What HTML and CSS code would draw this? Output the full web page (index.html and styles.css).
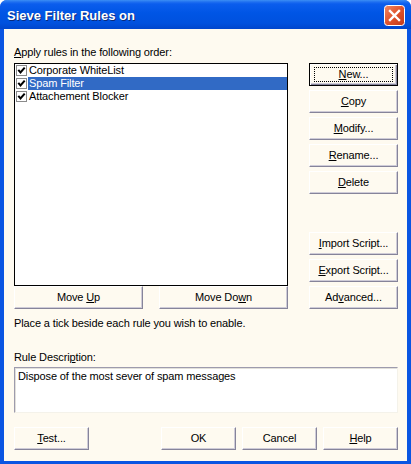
FILE: index.html
```html
<!DOCTYPE html>
<html>
<head>
<meta charset="utf-8">
<link rel="stylesheet" href="styles.css">
</head>
<body>
<div class="window">
  <div class="titlebar">
    <span class="title">Sieve Filter Rules on</span>
    <span class="close">
      <svg width="21" height="21" viewBox="0 0 21 21">
        <defs>
          <linearGradient id="cg" x1="0" y1="0" x2="1" y2="1">
            <stop offset="0" stop-color="#f08a66"/>
            <stop offset="0.5" stop-color="#e0532c"/>
            <stop offset="1" stop-color="#c0391a"/>
          </linearGradient>
        </defs>
        <rect x="0.5" y="0.5" width="20" height="20" rx="3" fill="url(#cg)" stroke="#ffffff"/>
        <path d="M6 6 L15 15 M15 6 L6 15" stroke="#ffffff" stroke-width="2.4" stroke-linecap="square"/>
      </svg>
    </span>
  </div>
  <div class="client">
    <div class="label"><u>A</u>pply rules in the following order:</div>
    <div class="main">
      <div class="leftcol">
        <div class="listbox">
          <div class="item">
            <span class="chk"><svg width="11" height="11" viewBox="0 0 11 11"><path d="M2.3 4.8 L4.5 7.4 L8.7 2.6" fill="none" stroke="#000" stroke-width="2"/></svg></span>
            <span class="txt">Corporate WhiteList</span>
          </div>
          <div class="item selected">
            <span class="chk"><svg width="11" height="11" viewBox="0 0 11 11"><path d="M2.3 4.8 L4.5 7.4 L8.7 2.6" fill="none" stroke="#000" stroke-width="2"/></svg></span>
            <span class="txt">Spam Filter</span>
          </div>
          <div class="item">
            <span class="chk"><svg width="11" height="11" viewBox="0 0 11 11"><path d="M2.3 4.8 L4.5 7.4 L8.7 2.6" fill="none" stroke="#000" stroke-width="2"/></svg></span>
            <span class="txt">Attachement Blocker</span>
          </div>
        </div>
        <div class="moverow">
          <span class="btn move"><span>Move <u>U</u>p</span></span>
          <span class="btn move"><span>Move Do<u>w</u>n</span></span>
        </div>
      </div>
      <div class="rightcol">
        <span class="btn side default"><span class="focus"><span><u>N</u>ew...</span></span></span>
        <span class="btn side"><span><u>C</u>opy</span></span>
        <span class="btn side"><span><u>M</u>odify...</span></span>
        <span class="btn side"><span><u>R</u>ename...</span></span>
        <span class="btn side"><span><u>D</u>elete</span></span>
        <span class="btn side gapped"><span><u>I</u>mport Script...</span></span>
        <span class="btn side"><span><u>E</u>xport Script...</span></span>
        <span class="btn side"><span>Ad<u>v</u>anced...</span></span>
      </div>
    </div>
    <div class="hint">Place a tick beside each rule you wish to enable.</div>
    <div class="label desc-label">Rule Descri<u>p</u>tion:</div>
    <div class="desc">Dispose of the most sever of spam messages</div>
    <div class="bottom">
      <span class="btn bbtn"><span><u>T</u>est...</span></span>
      <span class="spacer"></span>
      <span class="btn bbtn"><span>OK</span></span>
      <span class="btn bbtn"><span>Cancel</span></span>
      <span class="btn bbtn"><span><u>H</u>elp</span></span>
    </div>
  </div>
</div>
</body>
</html>
```
FILE: styles.css
```css
* { box-sizing: border-box; }
html, body { margin: 0; padding: 0; background: #ffffff; }
body {
  font-family: "Liberation Sans", Arial, sans-serif;
  font-size: 11px;
  line-height: 13px;
  letter-spacing: -0.12px;
  color: #000;
}
.window {
  width: 411px;
  height: 464px;
  background: #0a55e2;
  border-radius: 7px 7px 0 0;
  display: flex;
  flex-direction: column;
  overflow: hidden;
}
.titlebar {
  height: 29px;
  flex: none;
  display: flex;
  align-items: center;
  padding: 0 6px 0 7px;
  background: linear-gradient(to bottom, #3c8ef5 0, #1f6ff0 2px, #0b5ded 4px, #0055e5 45%, #0051de 80%, #0046cc 100%);
}
.title {
  flex: 1;
  color: #fff;
  font-weight: bold;
  font-size: 13px;
  letter-spacing: 0;
  text-shadow: 1px 1px 0 #0a2a7a;
  padding-top: 2px;
}
.close { width: 21px; height: 21px; display: block; margin-top: 1px; }
.close svg { display: block; }
.client {
  flex: 1;
  margin: 0 4px 3px 4px;
  background: #fefaf0;
  padding: 17px 9px 0 10px;
  display: flex;
  flex-direction: column;
}
.label { height: 13px; }
.main {
  margin-top: 4px;
  display: flex;
  justify-content: space-between;
}
.leftcol { width: 274px; display: flex; flex-direction: column; }
.listbox {
  height: 223px;
  background: #fff;
  border: 1px solid #000;
}
.item {
  height: 13px;
  display: flex;
  align-items: center;
}
.chk {
  width: 11px;
  height: 11px;
  margin-left: 1px;
  border: 1px solid #8a8a8a;
  background: #fff;
  display: flex;
  align-items: center;
  justify-content: center;
  flex: none;
}
.chk svg { display: block; margin: -1px; }
.txt { flex: 1; height: 13px; padding-left: 1px; margin-left: 1px; }
.item.selected .txt { background: #316ac5; color: #fff; }
.moverow {
  display: flex;
  justify-content: space-between;
}
.btn {
  height: 23px;
  display: flex;
  align-items: center;
  justify-content: center;
  background: #fefaf0;
  border-top: 1px solid #ffffff;
  border-left: 1px solid #ffffff;
  border-right: 1px solid #86849a;
  border-bottom: 1px solid #86849a;
  box-shadow: inset -1px -1px 0 #cfccd8;
  white-space: nowrap;
}
.move { width: 129px; }
.rightcol {
  width: 89px;
  display: flex;
  flex-direction: column;
  gap: 4px;
}
.side { width: 89px; }
.gapped { margin-top: 34px; }
.default {
  border: 1px solid #000;
  box-shadow: inset 1px 1px 0 #ffffff, inset -1px -1px 0 #86849a, inset -2px -2px 0 #cfccd8;
}
.focus {
  width: 79px;
  height: 15px;
  border: 1px dotted #000;
  display: flex;
  align-items: center;
  justify-content: center;
}
.hint { margin-top: 8px; height: 13px; }
.desc-label { margin-top: 21px; }
.desc {
  margin-top: 3px;
  height: 46px;
  width: 384px;
  background: #fff;
  border-top: 1px solid #9d9bad;
  border-left: 1px solid #9d9bad;
  border-right: 1px solid #f4f2ea;
  border-bottom: 1px solid #f4f2ea;
  box-shadow: inset 1px 1px 0 #e2e0da;
  padding: 2px 0 0 3px;
}
.bottom {
  margin-top: 14px;
  display: flex;
  gap: 6px;
  width: 384px;
}
.bbtn { width: 75px; }
.spacer { flex: 1; }
```
